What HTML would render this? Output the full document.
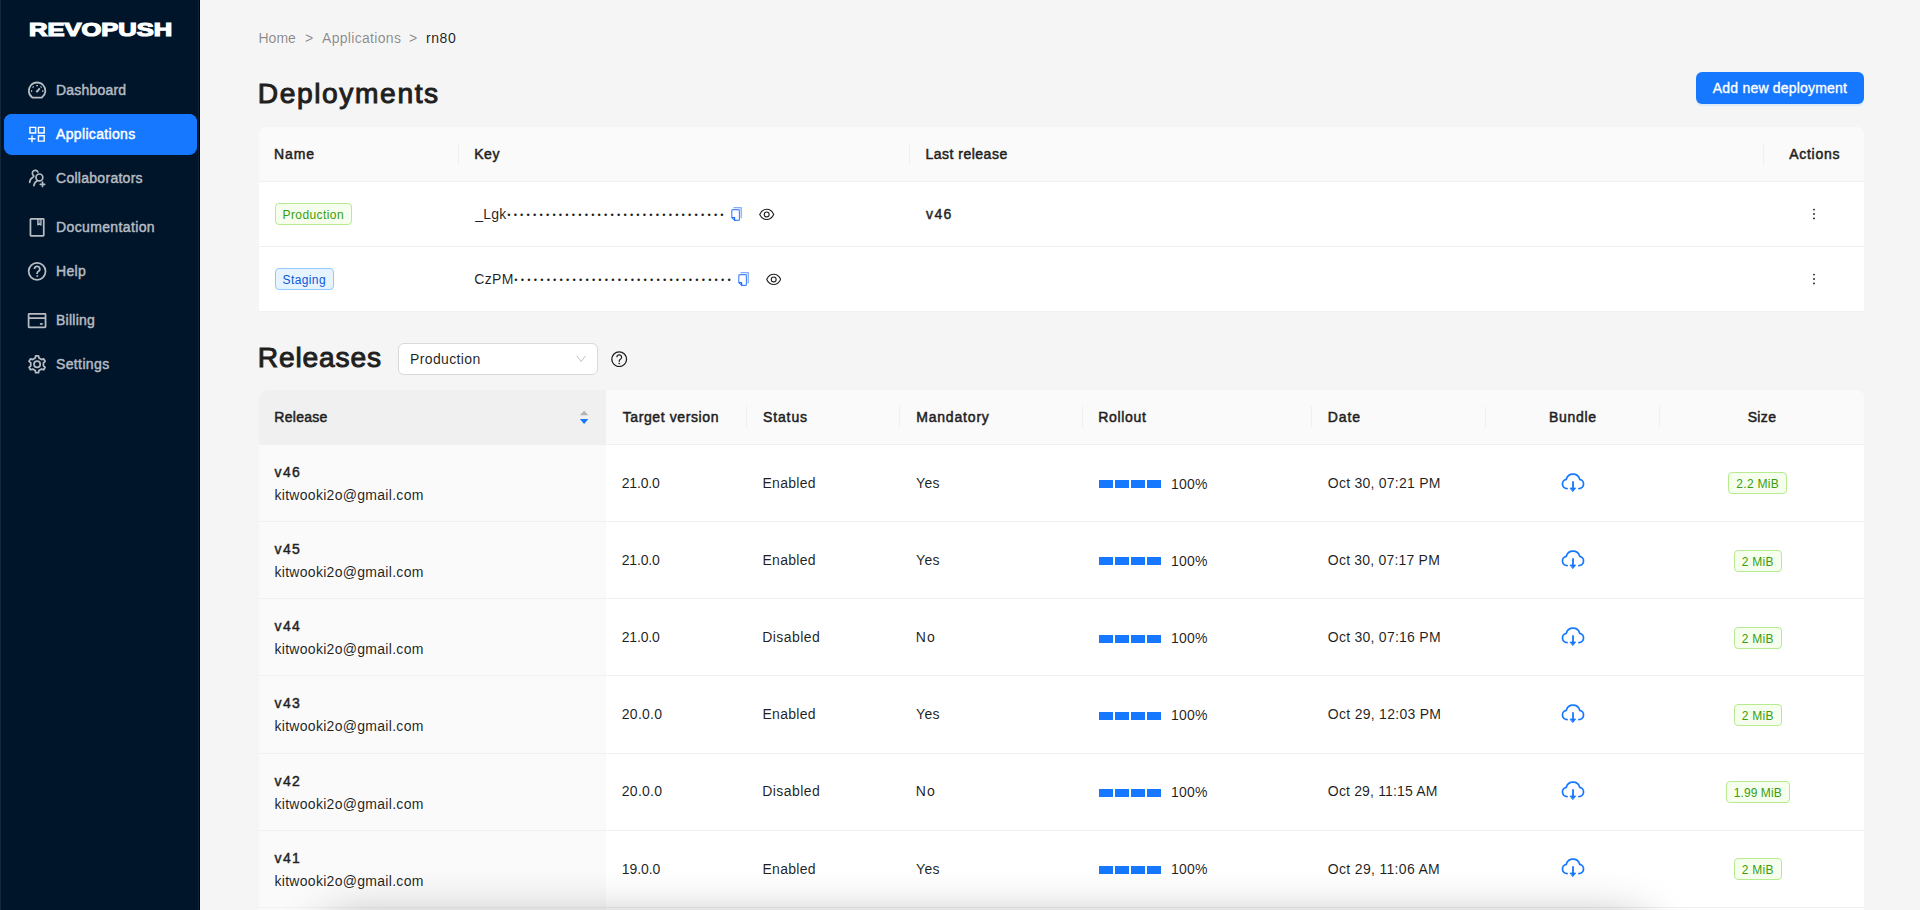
<!DOCTYPE html>
<html lang="en">
<head>
<meta charset="utf-8">
<title>RevoPush - Deployments</title>
<style>
*{box-sizing:border-box;margin:0;padding:0}
html,body{width:1920px;height:910px;overflow:hidden}
body{font-family:"Liberation Sans",sans-serif;font-size:14px;line-height:22px;color:rgba(0,0,0,.88);background:#f5f5f5;position:relative}
/* ---------- sidebar ---------- */
.side{position:absolute;left:0;top:0;width:200px;height:910px;background:linear-gradient(90deg,#15273a 0 1px,#001529 1px 198px,#0f2135 198px 199px,#000510 199px 200px)}
.logo{position:absolute;left:28.6px;top:15.8px;height:28px;line-height:28px;font-size:18.4px;font-weight:700;color:#fff;transform-origin:0 50%;transform:scaleX(1.387);-webkit-text-stroke:1.2px #fff;white-space:nowrap}
.mi{position:absolute;left:4px;width:193px;height:40px;border-radius:8px;color:#b6bcc3;font-size:14px;line-height:40px;white-space:nowrap;-webkit-text-stroke:.45px currentColor}
.mi.sel{background:#1677ff;color:#fff}
.mi.sel:before{content:"";position:absolute;left:-.3px;top:-.5px;width:193.500px;height:41px;border-radius:8px;background:#1677ff}
.mi svg{position:absolute;left:24px;top:11px;width:18px;height:18px;overflow:visible;fill:none;stroke:currentColor;stroke-width:1.75;stroke-linecap:round;stroke-linejoin:round}
.mi span{position:absolute;left:52px;top:0;letter-spacing:.18px}
/* ---------- content ---------- */
.bc{position:absolute;left:258.500px;top:27px;height:22px;line-height:22px;color:rgba(0,0,0,.45);white-space:nowrap}
.bc span{position:absolute;top:0}
.bc b{font-weight:400;color:rgba(0,0,0,.88)}
h2{position:absolute;left:257.700px;font-size:28.200px;line-height:36px;font-weight:400;color:#1f1f1f;-webkit-text-stroke:1px #1f1f1f;white-space:nowrap;letter-spacing:.85px}
.btn{position:absolute;left:1696px;top:72px;width:168px;height:32px;border-radius:6px;background:#1677ff;color:#fff;text-align:center;line-height:32px;box-shadow:0 2px 0 rgba(5,145,255,.1);white-space:nowrap;letter-spacing:.2px;-webkit-text-stroke:.35px #fff}
/* ---------- tables ---------- */
.tb{position:absolute;left:258.500px;width:1605.500px;background:#fff;border-radius:8px 8px 0 0}
.tr{position:relative;display:flex;align-items:center;border-bottom:1px solid #f0f0f0}
.th{background:#fafafa;height:55px;border-radius:8px 8px 0 0}
.th .c{line-height:22px;height:54px}
.h{display:inline-block;position:relative;font-weight:400;color:#1f1f1f;-webkit-text-stroke:.5px #1f1f1f;letter-spacing:.4px}
.th .c+.c:before{content:"";position:absolute;left:-.5px;top:16px;width:1px;height:22px;background:#f0f0f0}
.c{padding:16px;flex:none;white-space:nowrap;position:relative}
.ctr{text-align:center}
.tag{display:inline-block;height:22px;line-height:22px;padding:0 7px;font-size:12px;border:1px solid;border-radius:4px;vertical-align:middle;margin-right:8px;letter-spacing:.3px;position:relative;top:-.25px}
.tag.g{color:#389e0d;background:#f6ffed;border-color:#b7eb8f}
.tag.b{color:#0958d9;background:#e6f4ff;border-color:#91caff}
.t1 .tr{height:65.140px}
.t1 .tag{top:-.45px}
.t1 .th{height:55px}
.t1 .c1{width:200px}.t1 .c2{width:450.500px}.t1 .c3{width:854.500px}.t1 .c4{width:100.500px}
.key{display:flex;align-items:center;height:32px}
.dots{letter-spacing:3.205px;font-size:9.300px;position:relative;top:1px}
.key svg{flex:none;position:relative;top:0}
.sm{font-weight:400;color:#1f1f1f;-webkit-text-stroke:.45px #1f1f1f;letter-spacing:1.400px;position:relative;left:1px}
.more{display:block;margin:0 auto;width:16px;height:16px;position:relative;top:-.4px}
/* releases */

.select{position:absolute;left:398.100px;top:343px;width:200px;height:32px;border:1px solid #d9d9d9;border-radius:6px;background:#fff;line-height:30px;padding-left:11px;letter-spacing:.35px}
.select svg{position:absolute;left:176.800px;top:11.300px;width:10.400px;height:7.200px}
.help{position:absolute;left:611.300px;top:350.800px;width:16.400px;height:16.400px}
.t2 .tr{height:77.140px}
.t2 .th{height:55px}
.t2 .c1{width:347.500px}.t2 .c2{width:140.500px}.t2 .c3{width:153px}.t2 .c4{width:183px}.t2 .c5{width:229px}.t2 .c6{width:174px}.t2 .c7{width:174px}.t2 .c8{width:204.500px}
.t2 .tr .c1{background:#fafafa;height:76.140px}
.t2 .th .c1{background:#f0f0f0;height:54px;border-radius:8px 0 0 0}
.t2 .th .c2:before{display:none}
.sort{position:absolute;left:321px;top:20px;width:9px;height:14px}
.ver{font-weight:400;color:#1f1f1f;-webkit-text-stroke:.45px #1f1f1f;letter-spacing:1.400px}
.em{letter-spacing:.29px}
.f{display:inline-block;position:relative;top:-.2px}
.t1 .f,.t1 .sm{top:-.4px}
.ver,.em{position:relative;top:0}
.em{top:1px}
.steps{display:inline-block;vertical-align:middle;width:62px;height:8px;margin-right:10.500px;position:relative;top:.6px;background:linear-gradient(90deg,#1677ff 0 14px,transparent 14px 16px,#1677ff 16px 30px,transparent 30px 32px,#1677ff 32px 46px,transparent 46px 48px,#1677ff 48px 62px)}
.pct{display:inline-block;vertical-align:middle;letter-spacing:.2px;position:relative;top:0}
.cloud{display:block;margin:0 auto;width:24px;height:24px;position:relative;top:.8px}
.fade{position:absolute;left:329px;top:929px;width:1315px;height:60px;border-radius:24px;box-shadow:0 0 47px 10px rgba(0,0,0,.3)}
</style>
</head>
<body>
<div class="side">
  <div class="logo">REVOPUSH</div>
  <div class="mi" style="top:70px"><svg viewBox="0 0 18 18"><path d="M4.300 16.550A8.300 8.300 0 1 1 13.900 16.550Z" stroke-width="1.800"/><path d="M9.200 10.300L11.300 7.900" stroke-width="1.900"/><circle cx="9.050" cy="10.450" r=".7" fill="currentColor" stroke-width=".8"/><path d="M9.100 4v1.200M4.700 5.600l.85.850M13.500 5.600l-.85.850M3 10.100h1.200M14.200 10.100h1.200" stroke-width="1.700" stroke-linecap="butt"/></svg><span style="letter-spacing:0.2px">Dashboard</span></div>
  <div class="mi sel" style="top:114px"><svg viewBox="0 0 18 18" style="stroke-width:1.450;stroke-linejoin:miter;stroke-linecap:butt"><path d="M1.950 2.350h5.650v5.650h-5.650zM10.450 2.350h5.700v5.650h-5.700zM10.450 10.800h5.700v5.300h-5.700zM4 10.400v6.900M.3 13.800h7.200"/></svg><span style="letter-spacing:0.34px">Applications</span></div>
  <div class="mi" style="top:158px"><svg viewBox="0 0 18 18" style="stroke-width:1.700"><path d="M5.500 6.500A2.900 2.900 0 1 1 9.900 3M5.500 6.500c.5.800.2 1.400-.6 1.800C3.100 9.200 1.900 10.900 1.700 13.300"/><circle cx="11.400" cy="8.400" r="3.400"/><path d="M9.300 11.700c-1.900.9-3.200 2.500-3.400 4.900M14.500 13.100v4.400M12.300 15.300h4.400"/></svg><span style="letter-spacing:0.28px">Collaborators</span></div>
  <div class="mi" style="top:207px"><svg viewBox="0 0 18 18"><path d="M3 .85h12.200a.55.55 0 0 1 .55.550v15.800a.55.55 0 0 1-.55.550H3a.55.55 0 0 1-.55-.55V1.400A.55.55 0 0 1 3 .85z"/><path d="M9.800 1v6l1.600-1.300L13 7V1" stroke-width="1.200" fill="currentColor" fill-opacity=".45"/></svg><span style="letter-spacing:0.37px">Documentation</span></div>
  <div class="mi" style="top:251px"><svg viewBox="0 0 18 18"><circle cx="9.100" cy="9.300" r="8.450"/><path d="M6.500 7a2.650 2.600 0 1 1 4 2.200c-.9.500-1.350 1.100-1.350 2.100v.7" stroke-linecap="butt"/><circle cx="9.150" cy="14" r=".55" fill="currentColor" stroke-width=".7"/></svg><span style="letter-spacing:0.35px">Help</span></div>
  <div class="mi" style="top:300px"><svg viewBox="0 0 18 18" style="stroke-width:1.750"><path d="M1.200 2.850h15.750a.6.600 0 0 1 .6.600v12.200a.6.600 0 0 1-.6.600H1.200a.6.600 0 0 1-.6-.6V3.450a.6.600 0 0 1 .6-.6zM.6 7h16.950"/><path d="M11.900 12.950h2.800" stroke-width="1.700" stroke-linecap="butt"/></svg><span style="letter-spacing:0.24px">Billing</span></div>
  <div class="mi" style="top:344px"><svg viewBox="0 0 18 18"><circle cx="9.100" cy="9.300" r="3.100"/><path d="M11.00 3.08L10.51 0.87L7.69 0.87L7.20 3.08L4.67 4.55L2.50 3.86L1.09 6.31L2.77 7.84L2.77 10.76L1.09 12.29L2.50 14.74L4.67 14.05L7.20 15.52L7.69 17.73L10.51 17.73L11.00 15.52L13.53 14.05L15.70 14.74L17.11 12.29L15.43 10.76L15.43 7.84L17.11 6.31L15.70 3.86L13.53 4.55Z"/></svg><span style="letter-spacing:0.37px">Settings</span></div>
</div>
<div class="bc"><span style="left:0">Home</span><span style="left:46.500px">&gt;</span><span style="left:63.500px;letter-spacing:.31px">Applications</span><span style="left:150.500px">&gt;</span><span style="left:167.500px;letter-spacing:.57px"><b>rn80</b></span></div>
<h2 style="top:74.650px;letter-spacing:1.600px">Deployments</h2>
<div class="btn"><span>Add new deployment</span></div>
<div class="tb t1" style="top:127px">
  <div class="tr th"><div class="c c1"><span class="h" style="letter-spacing:0.92px;left:-0.61px">Name</span></div><div class="c c2"><span class="h" style="letter-spacing:0.58px;left:-0.36px">Key</span></div><div class="c c3"><span class="h" style="letter-spacing:0.50px;left:0.43px">Last release</span></div><div class="c c4 ctr"><span class="h" style="letter-spacing:0.73px;left:0.95px">Actions</span></div></div>
  <div class="tr"><div class="c c1"><span class="tag g" style="letter-spacing:.41px">Production</span></div><div class="c c2"><div class="key"><span class="f" style="letter-spacing:0.23px;left:0.66px">_Lgk</span><span class="dots" style="margin-left:1.400px">••••••••••••••••••••••••••••••••••</span><svg width="11.300" height="14.200" viewBox="0 0 11.300 14.200" style="margin-left:4px" fill="none" stroke-width="1.150" stroke-linejoin="round"><path d="M8.400 1.200h1.800v10.200H8.400z" fill="#c9dbff"/><path d="M2.500 .6h7.200a1 1 0 0 1 1 1v9.700" stroke="#86adff"/><path d="M1.800 2.700h5.600a1 1 0 0 1 1 1v8.700a1 1 0 0 1-1 1H3.600L.8 10.600V3.700a1 1 0 0 1 1-1z" fill="#fff" stroke="#4687ff"/><path d="M.8 10.600h2.800v2.800" stroke="#1d6dff" stroke-width="1.250"/></svg><svg width="15.400" height="12.800" viewBox="0 0 15.400 12.800" style="margin-left:17px" fill="none" stroke="rgba(0,0,0,.88)" stroke-width="1.120"><path d="M.7 6.400C2.300 3 4.600 1.300 7.700 1.300S13.100 3 14.700 6.400C13.100 9.800 10.800 11.500 7.700 11.500S2.300 9.800.7 6.400z"/><circle cx="7.700" cy="6.400" r="2.450"/></svg></div></div><div class="c c3"><span class="sm">v46</span></div><div class="c c4"><svg class="more" viewBox="0 0 16 16"><circle cx="8" cy="3.600" r=".95" fill="rgba(0,0,0,.88)"/><circle cx="8" cy="8" r=".95" fill="rgba(0,0,0,.88)"/><circle cx="8" cy="12.400" r=".95" fill="rgba(0,0,0,.88)"/></svg></div></div>
  <div class="tr"><div class="c c1"><span class="tag b" style="letter-spacing:.4px">Staging</span></div><div class="c c2"><div class="key"><span class="f" style="letter-spacing:0.33px;left:-0.31px">CzPM</span><span class="dots" style="margin-left:.43px">••••••••••••••••••••••••••••••••••</span><svg width="11.300" height="14.200" viewBox="0 0 11.300 14.200" style="margin-left:3.500px" fill="none" stroke-width="1.150" stroke-linejoin="round"><path d="M8.400 1.200h1.800v10.200H8.400z" fill="#c9dbff"/><path d="M2.500 .6h7.200a1 1 0 0 1 1 1v9.700" stroke="#86adff"/><path d="M1.800 2.700h5.600a1 1 0 0 1 1 1v8.700a1 1 0 0 1-1 1H3.600L.8 10.600V3.700a1 1 0 0 1 1-1z" fill="#fff" stroke="#4687ff"/><path d="M.8 10.600h2.800v2.800" stroke="#1d6dff" stroke-width="1.250"/></svg><svg width="15.400" height="12.800" viewBox="0 0 15.400 12.800" style="margin-left:17px" fill="none" stroke="rgba(0,0,0,.88)" stroke-width="1.120"><path d="M.7 6.400C2.300 3 4.600 1.300 7.700 1.300S13.100 3 14.700 6.400C13.100 9.800 10.800 11.500 7.700 11.500S2.300 9.800.7 6.400z"/><circle cx="7.700" cy="6.400" r="2.450"/></svg></div></div><div class="c c3"></div><div class="c c4"><svg class="more" viewBox="0 0 16 16"><circle cx="8" cy="3.600" r=".95" fill="rgba(0,0,0,.88)"/><circle cx="8" cy="8" r=".95" fill="rgba(0,0,0,.88)"/><circle cx="8" cy="12.400" r=".95" fill="rgba(0,0,0,.88)"/></svg></div></div>
</div>
<h2 style="top:338.550px">Releases</h2>
<div class="select">Production<svg viewBox="0 0 11 8" fill="none" stroke="#bfbfbf" stroke-width="1.100"><path d="M.6 .8L5.500 7.100L10.400 .8"/></svg></div>
<svg class="help" viewBox="0 0 18 18" fill="none" stroke="rgba(0,0,0,.88)" stroke-width="1.400"><circle cx="9" cy="9" r="8.100"/><path d="M6.400 6.900a2.650 2.600 0 1 1 4 2.200c-.9.500-1.350 1.100-1.350 2.100v.600"/><circle cx="9.050" cy="13.700" r=".6" fill="rgba(0,0,0,.88)" stroke-width=".6"/></svg>
<div class="tb t2" style="top:390px">
  <div class="tr th"><div class="c c1"><span class="h" style="letter-spacing:0.28px;left:-0.21px">Release</span><svg class="sort" viewBox="0 0 9 14" style="overflow:visible"><path d="M4.100 .7L8.300 5.300H-.1z" fill="#b3b3b3"/><path d="M4.100 13.900L8.300 8.900H-.1z" fill="#1677ff"/></svg></div><div class="c c2"><span class="h" style="letter-spacing:0.60px;left:0.71px">Target version</span></div><div class="c c3"><span class="h" style="letter-spacing:0.89px;left:0.43px">Status</span></div><div class="c c4"><span class="h" style="letter-spacing:0.82px;left:0.66px">Mandatory</span></div><div class="c c5"><span class="h" style="letter-spacing:0.67px;left:-0.29px">Rollout</span></div><div class="c c6"><span class="h" style="letter-spacing:0.85px;left:0.32px">Date</span></div><div class="c c7 ctr"><span class="h" style="letter-spacing:0.70px;left:0.41px">Bundle</span></div><div class="c c8 ctr"><span class="h" style="letter-spacing:0.33px;left:0.23px">Size</span></div></div>
  <div class="tr"><div class="c c1"><div class="ver">v46</div><div class="em">kitwooki2o@gmail.com</div></div><div class="c c2"><span class="f" style="letter-spacing:-0.16px;left:-0.27px">21.0.0</span></div><div class="c c3"><span class="f" style="letter-spacing:0.31px;left:-0.10px">Enabled</span></div><div class="c c4"><span class="f" style="letter-spacing:0.32px;left:0.57px">Yes</span></div><div class="c c5"><span class="steps"></span><span class="pct">100%</span></div><div class="c c6"><span class="f" style="letter-spacing:0.24px;left:0.35px">Oct 30, 07:21 PM</span></div><div class="c c7"><svg class="cloud" viewBox="0 0 24 24" fill="none" stroke="#1677ff" stroke-width="1.700" stroke-linecap="round" stroke-linejoin="round"><path d="M6.100 16.600a4.690 4.690 0 0 1-.8-9.300a6.900 6.900 0 0 1 13.400 0a4.690 4.690 0 0 1-.8 9.300"/><path d="M12 9.200v7" stroke-width="1.800" stroke-linecap="butt"/><path d="M9.300 16h5.400L12 19.400z" fill="#1677ff" stroke-width=".8"/></svg></div><div class="c c8 ctr"><span class="tag g">2.2 MiB</span></div></div>
  <div class="tr"><div class="c c1"><div class="ver">v45</div><div class="em">kitwooki2o@gmail.com</div></div><div class="c c2"><span class="f" style="letter-spacing:-0.16px;left:-0.27px">21.0.0</span></div><div class="c c3"><span class="f" style="letter-spacing:0.31px;left:-0.10px">Enabled</span></div><div class="c c4"><span class="f" style="letter-spacing:0.32px;left:0.57px">Yes</span></div><div class="c c5"><span class="steps"></span><span class="pct">100%</span></div><div class="c c6"><span class="f" style="letter-spacing:0.20px;left:0.35px">Oct 30, 07:17 PM</span></div><div class="c c7"><svg class="cloud" viewBox="0 0 24 24" fill="none" stroke="#1677ff" stroke-width="1.700" stroke-linecap="round" stroke-linejoin="round"><path d="M6.100 16.600a4.690 4.690 0 0 1-.8-9.300a6.900 6.900 0 0 1 13.400 0a4.690 4.690 0 0 1-.8 9.300"/><path d="M12 9.200v7" stroke-width="1.800" stroke-linecap="butt"/><path d="M9.300 16h5.400L12 19.400z" fill="#1677ff" stroke-width=".8"/></svg></div><div class="c c8 ctr"><span class="tag g">2 MiB</span></div></div>
  <div class="tr"><div class="c c1"><div class="ver">v44</div><div class="em">kitwooki2o@gmail.com</div></div><div class="c c2"><span class="f" style="letter-spacing:-0.16px;left:-0.27px">21.0.0</span></div><div class="c c3"><span class="f" style="letter-spacing:0.45px;left:-0.31px">Disabled</span></div><div class="c c4"><span class="f" style="letter-spacing:1.10px;left:0.32px">No</span></div><div class="c c5"><span class="steps"></span><span class="pct">100%</span></div><div class="c c6"><span class="f" style="letter-spacing:0.25px;left:0.35px">Oct 30, 07:16 PM</span></div><div class="c c7"><svg class="cloud" viewBox="0 0 24 24" fill="none" stroke="#1677ff" stroke-width="1.700" stroke-linecap="round" stroke-linejoin="round"><path d="M6.100 16.600a4.690 4.690 0 0 1-.8-9.300a6.900 6.900 0 0 1 13.400 0a4.690 4.690 0 0 1-.8 9.300"/><path d="M12 9.200v7" stroke-width="1.800" stroke-linecap="butt"/><path d="M9.300 16h5.400L12 19.400z" fill="#1677ff" stroke-width=".8"/></svg></div><div class="c c8 ctr"><span class="tag g">2 MiB</span></div></div>
  <div class="tr"><div class="c c1"><div class="ver">v43</div><div class="em">kitwooki2o@gmail.com</div></div><div class="c c2"><span class="f" style="letter-spacing:0.28px;left:-0.26px">20.0.0</span></div><div class="c c3"><span class="f" style="letter-spacing:0.31px;left:-0.10px">Enabled</span></div><div class="c c4"><span class="f" style="letter-spacing:0.32px;left:0.57px">Yes</span></div><div class="c c5"><span class="steps"></span><span class="pct">100%</span></div><div class="c c6"><span class="f" style="letter-spacing:0.28px;left:0.35px">Oct 29, 12:03 PM</span></div><div class="c c7"><svg class="cloud" viewBox="0 0 24 24" fill="none" stroke="#1677ff" stroke-width="1.700" stroke-linecap="round" stroke-linejoin="round"><path d="M6.100 16.600a4.690 4.690 0 0 1-.8-9.300a6.900 6.900 0 0 1 13.400 0a4.690 4.690 0 0 1-.8 9.300"/><path d="M12 9.200v7" stroke-width="1.800" stroke-linecap="butt"/><path d="M9.300 16h5.400L12 19.400z" fill="#1677ff" stroke-width=".8"/></svg></div><div class="c c8 ctr"><span class="tag g">2 MiB</span></div></div>
  <div class="tr"><div class="c c1"><div class="ver">v42</div><div class="em">kitwooki2o@gmail.com</div></div><div class="c c2"><span class="f" style="letter-spacing:0.28px;left:-0.26px">20.0.0</span></div><div class="c c3"><span class="f" style="letter-spacing:0.45px;left:-0.31px">Disabled</span></div><div class="c c4"><span class="f" style="letter-spacing:1.10px;left:0.32px">No</span></div><div class="c c5"><span class="steps"></span><span class="pct">100%</span></div><div class="c c6"><span class="f" style="letter-spacing:0.16px;left:0.35px">Oct 29, 11:15 AM</span></div><div class="c c7"><svg class="cloud" viewBox="0 0 24 24" fill="none" stroke="#1677ff" stroke-width="1.700" stroke-linecap="round" stroke-linejoin="round"><path d="M6.100 16.600a4.690 4.690 0 0 1-.8-9.300a6.900 6.900 0 0 1 13.400 0a4.690 4.690 0 0 1-.8 9.300"/><path d="M12 9.200v7" stroke-width="1.800" stroke-linecap="butt"/><path d="M9.300 16h5.400L12 19.400z" fill="#1677ff" stroke-width=".8"/></svg></div><div class="c c8 ctr"><span class="tag g" style="letter-spacing:.08px">1.99 MiB</span></div></div>
  <div class="tr"><div class="c c1"><div class="ver">v41</div><div class="em">kitwooki2o@gmail.com</div></div><div class="c c2"><span class="f" style="letter-spacing:-0.07px;left:-0.25px">19.0.0</span></div><div class="c c3"><span class="f" style="letter-spacing:0.31px;left:-0.10px">Enabled</span></div><div class="c c4"><span class="f" style="letter-spacing:0.32px;left:0.57px">Yes</span></div><div class="c c5"><span class="steps"></span><span class="pct">100%</span></div><div class="c c6"><span class="f" style="letter-spacing:0.32px;left:0.35px">Oct 29, 11:06 AM</span></div><div class="c c7"><svg class="cloud" viewBox="0 0 24 24" fill="none" stroke="#1677ff" stroke-width="1.700" stroke-linecap="round" stroke-linejoin="round"><path d="M6.100 16.600a4.690 4.690 0 0 1-.8-9.300a6.900 6.900 0 0 1 13.400 0a4.690 4.690 0 0 1-.8 9.300"/><path d="M12 9.200v7" stroke-width="1.800" stroke-linecap="butt"/><path d="M9.300 16h5.400L12 19.400z" fill="#1677ff" stroke-width=".8"/></svg></div><div class="c c8 ctr"><span class="tag g">2 MiB</span></div></div>
  <div class="tr"><div class="c c1"></div></div>
</div>
<div class="fade"></div>
</body>
</html>
